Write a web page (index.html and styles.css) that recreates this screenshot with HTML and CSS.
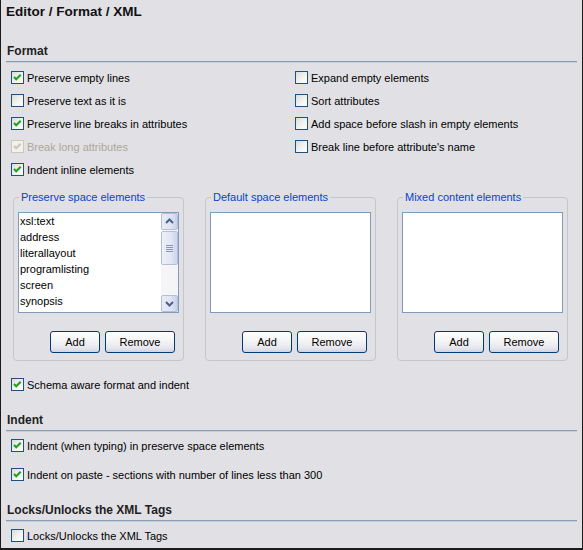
FILE: index.html
```html
<!DOCTYPE html>
<html>
<head>
<meta charset="utf-8">
<link rel="stylesheet" href="styles.css">
</head>
<body>
<div class="frame">
  <div class="title">Editor / Format / XML</div>

  <div class="section-head first">Format</div>
  <div class="check-grid">
    <label class="check"><span class="box on"><svg viewBox="0 0 11 11"><polyline points="2,5 4.2,7.3 8.7,2.7"/></svg></span><span>Preserve empty lines</span></label>
    <label class="check"><span class="box"></span><span>Expand empty elements</span></label>
    <label class="check"><span class="box"></span><span>Preserve text as it is</span></label>
    <label class="check"><span class="box"></span><span>Sort attributes</span></label>
    <label class="check"><span class="box on"><svg viewBox="0 0 11 11"><polyline points="2,5 4.2,7.3 8.7,2.7"/></svg></span><span>Preserve line breaks in attributes</span></label>
    <label class="check"><span class="box"></span><span>Add space before slash in empty elements</span></label>
    <label class="check disabled"><span class="box on"><svg viewBox="0 0 11 11"><polyline points="2,5 4.2,7.3 8.7,2.7"/></svg></span><span>Break long attributes</span></label>
    <label class="check"><span class="box"></span><span>Break line before attribute's name</span></label>
    <label class="check"><span class="box on"><svg viewBox="0 0 11 11"><polyline points="2,5 4.2,7.3 8.7,2.7"/></svg></span><span>Indent inline elements</span></label>
  </div>

  <div class="groups">
    <fieldset class="group">
      <legend>Preserve space elements</legend>
      <div class="list">
        <div class="items">
          <div>xsl:text</div>
          <div>address</div>
          <div>literallayout</div>
          <div>programlisting</div>
          <div>screen</div>
          <div>synopsis</div>
        </div>
        <div class="scrollbar">
          <div class="sb-btn"><svg viewBox="0 0 15 15"><polyline points="4,9 7.5,5.5 11,9"/></svg></div>
          <div class="sb-thumb"><span></span><span></span><span></span><span></span></div>
          <div class="sb-fill"></div>
          <div class="sb-btn"><svg viewBox="0 0 15 15"><polyline points="4,6 7.5,9.5 11,6"/></svg></div>
        </div>
      </div>
      <div class="buttons"><button class="btn add">Add</button><button class="btn remove">Remove</button></div>
    </fieldset>
    <fieldset class="group">
      <legend>Default space elements</legend>
      <div class="list"></div>
      <div class="buttons"><button class="btn add">Add</button><button class="btn remove">Remove</button></div>
    </fieldset>
    <fieldset class="group">
      <legend>Mixed content elements</legend>
      <div class="list"></div>
      <div class="buttons"><button class="btn add">Add</button><button class="btn remove">Remove</button></div>
    </fieldset>
  </div>

  <label class="check single schema"><span class="box on"><svg viewBox="0 0 11 11"><polyline points="2,5 4.2,7.3 8.7,2.7"/></svg></span><span>Schema aware format and indent</span></label>

  <div class="section-head">Indent</div>
  <div class="stack">
    <label class="check single"><span class="box on"><svg viewBox="0 0 11 11"><polyline points="2,5 4.2,7.3 8.7,2.7"/></svg></span><span>Indent (when typing) in preserve space elements</span></label>
    <label class="check single"><span class="box on"><svg viewBox="0 0 11 11"><polyline points="2,5 4.2,7.3 8.7,2.7"/></svg></span><span>Indent on paste - sections with number of lines less than 300</span></label>
  </div>

  <div class="section-head">Locks/Unlocks the XML Tags</div>
  <div class="stack">
    <label class="check single"><span class="box"></span><span>Locks/Unlocks the XML Tags</span></label>
  </div>
</div>
</body>
</html>
```

FILE: styles.css
```css
html, body {
  margin: 0;
  padding: 0;
}
body {
  background: #e1e0e5;
  font-family: "Liberation Sans", Arial, sans-serif;
  font-size: 11px;
  color: #000;
}
.frame {
  box-sizing: border-box;
  width: 583px;
  height: 550px;
  border-left: 1px solid #1b1b1b;
  border-right: 1px solid #1b1b1b;
  border-bottom: 2px solid #1b1b1b;
  overflow: hidden;
}
.title {
  font-weight: bold;
  font-size: 13.5px;
  line-height: 16px;
  padding: 4px 0 0 5px;
  height: 16px;
  color: #111;
}
.section-head {
  font-weight: bold;
  font-size: 12px;
  line-height: 14px;
  color: #1e1e1e;
  margin: 17px 5px 0 5px;
  padding: 0 0 3px 1px;
  border-bottom: 1px solid #8a9db4;
  box-shadow: 0 1px 0 #c9cfd9;
}
.section-head.first {
  margin-top: 24px;
}
.check-grid {
  display: grid;
  grid-template-columns: 284px 1fr;
  grid-auto-rows: 23px;
  padding-left: 10px;
  margin-top: 4px;
}
.check {
  display: flex;
  align-items: center;
  height: 23px;
  white-space: nowrap;
}
.check .box {
  box-sizing: border-box;
  width: 13px;
  height: 13px;
  border: 1px solid #1c5180;
  background: linear-gradient(135deg, #dcdcd7 0%, #f4f4f2 60%, #ffffff 100%);
  margin-right: 3px;
  flex: none;
  display: flex;
}
.check .box svg {
  width: 11px;
  height: 11px;
}
.check .box polyline {
  fill: none;
  stroke: #21a121;
  stroke-width: 2.1;
}
.check.disabled {
  color: #aca899;
}
.check.disabled .box {
  border-color: #cac8bb;
  background: #f2f1ec;
}
.check.disabled .box polyline {
  stroke: #cac8bb;
}
.single {
  padding-left: 10px;
}
.schema {
  margin-top: 12px;
}
.stack {
  display: flex;
  flex-direction: column;
  gap: 6px;
  margin-top: 3px;
}
.groups {
  display: flex;
  gap: 21px;
  margin: 10px 0 0 12px;
}
.group {
  box-sizing: border-box;
  width: 171px;
  margin: 0;
  padding: 8px 4px 7px 4px;
  border: 1px solid #c6c6c6;
  border-radius: 4px;
  min-width: 0;
}
.group legend {
  color: #0046d5;
  font-size: 11px;
  line-height: 13px;
  padding: 0 2px;
  margin-left: 1px;
}
.list {
  box-sizing: border-box;
  width: 161px;
  height: 101px;
  border: 1px solid #7f9db9;
  background: #fff;
  display: flex;
}
.items {
  flex: 1;
  padding-left: 1px;
  line-height: 16px;
}
.scrollbar {
  width: 17px;
  display: flex;
  flex-direction: column;
  background: #f5f5f8;
}
.sb-btn {
  box-sizing: border-box;
  width: 17px;
  height: 17px;
  border: 1px solid #b4bfd6;
  border-radius: 2px;
  background: linear-gradient(to right, #e9ecf6, #dfe3f2 60%, #c9d1ea);
  display: flex;
  align-items: center;
  justify-content: center;
}
.sb-btn svg {
  width: 15px;
  height: 15px;
}
.sb-btn polyline {
  fill: none;
  stroke: #4d6185;
  stroke-width: 2;
}
.sb-thumb {
  box-sizing: border-box;
  height: 34px;
  margin-top: 1px;
  border: 1px solid #b4bfd6;
  border-radius: 2px;
  background: linear-gradient(to right, #eef0f8, #e2e6f4 60%, #cdd4ec);
  display: flex;
  flex-direction: column;
  align-items: center;
  justify-content: center;
  gap: 1px;
}
.sb-thumb span {
  width: 7px;
  height: 1px;
  background: #8c97b5;
}
.sb-fill {
  flex: 1;
}
.buttons {
  display: flex;
  justify-content: flex-end;
  gap: 5px;
  margin-top: 18px;
  padding-right: 4px;
}
.btn {
  box-sizing: border-box;
  height: 22px;
  border: 1px solid #003c74;
  border-radius: 3px;
  background: linear-gradient(#ffffff 0%, #f4f4f6 45%, #e6e6ee 80%, #d4d4e0 100%);
  font-family: "Liberation Sans", Arial, sans-serif;
  font-size: 11px;
  color: #000;
  padding: 0;
}
.btn.add {
  width: 50px;
}
.btn.remove {
  width: 70px;
}
```
